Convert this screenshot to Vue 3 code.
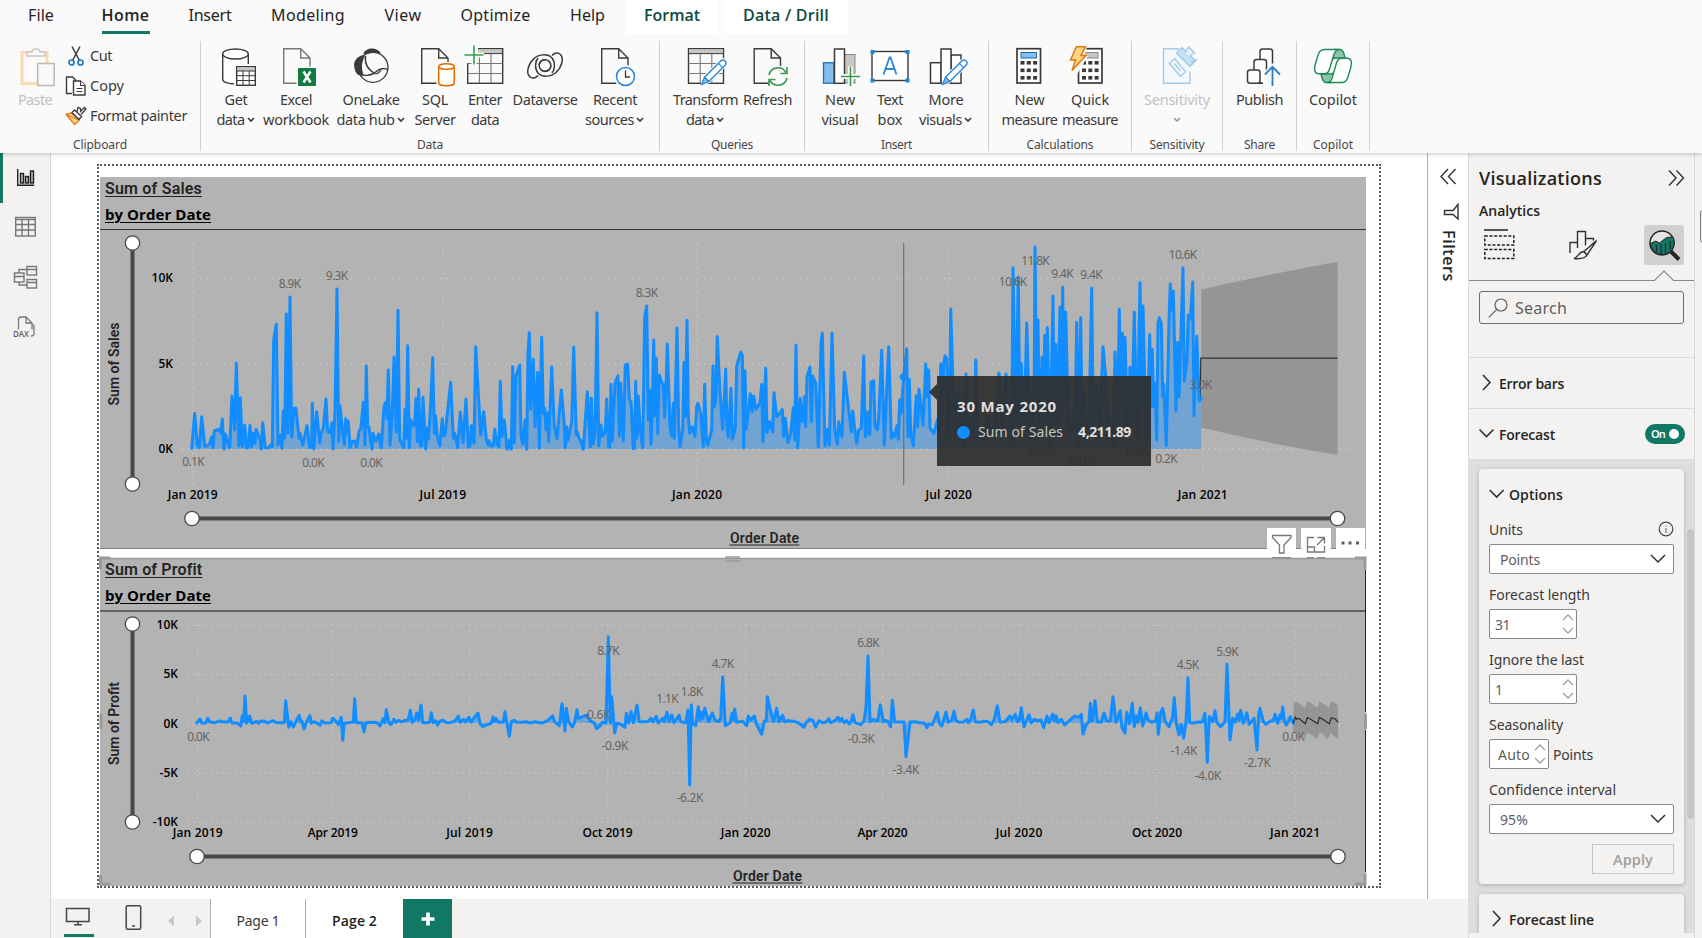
<script setup>
// Spreads or tightens the letters of an element so its text spans a given length.
const vFit = {
  mounted(el, { value, modifiers }) {
    if (!value) return
    const r = el.getBoundingClientRect()
    const w = modifiers.down ? r.height : r.width
    const n = el.textContent.trim().length
    el.style.letterSpacing = ((value - w) / n).toFixed(3) + 'px'
  }
}

const tabs = [
  { t: 'File', w: 82, f: 26 },
  { t: 'Home', w: 87, f: 48, c: 'active' },
  { t: 'Insert', w: 82, f: 43 },
  { t: 'Modeling', w: 114, f: 74 },
  { t: 'View', w: 76, f: 37 },
  { t: 'Optimize', w: 109, f: 70 },
  { t: 'Help', w: 75, f: 35 },
  { t: 'Format', w: 94, f: 56, c: 'ctx' },
  { t: 'Data / Drill', w: 124, f: 86, c: 'ctx drill' }
]

const D = '#3b3a39'
const doc = (x, c = D, f = '#fff') =>
  `<path d="M${x + .7} 4.7h17l9.3 9.3v25.3h-26.3z" fill="${f}" stroke="${c}" stroke-width="1.4"/><path d="M${x + 17.7} 4.7v9.3h9.3" fill="none" stroke="${c}" stroke-width="1.4"/>`
const docIn = (x) => doc(x, D, '#fafafa')
const cover = (x, y, w, h) => `<rect x="${x}" y="${y}" width="${w}" height="${h}" fill="#fafafa"/>`
const plus = (x, y) => `<path d="M${x} ${y - 10}v20M${x - 10} ${y}h20" stroke="#fafafa" stroke-width="5"/><path d="M${x} ${y - 9.5}v19M${x - 9.5} ${y}h19" stroke="#359e4c" stroke-width="1.6"/>`
const grid = (x) =>
  `<rect x="${x}" y="4.7" width="35" height="34.6" fill="#fafafa" stroke="${D}" stroke-width="1.4"/><rect x="${x + .7}" y="5.4" width="33.6" height="4" fill="#c8c6c4"/><path d="M${x} 9.6h35" stroke="${D}"/><path d="M${x} 19.5h35M${x} 29.5h35M${x + 11.7} 10v29M${x + 23.3} 10v29" stroke="#797775" stroke-width="1.1"/>`
const pencil = (x, y) =>
  `<g transform="translate(${x} ${y}) rotate(45)"><path d="M-4.6-35h9.2v28l-4.6 8-4.6-8z" fill="#fafafa"/><path d="M-3-31a3 3 0 0 1 6 0v23h-6z" fill="#fff" stroke="#2b88d8" stroke-width="1.4"/><path d="M-3-27.500h6" stroke="#2b88d8" stroke-width="1.2"/><path d="M-3-8h6l-3 7.500z" fill="#83beec" stroke="#2b88d8" stroke-width="1.2"/></g>`
const calc = (x) => {
  let s = `<rect x="${x}" y="4.700" width="23.500" height="34.300" fill="#fff" stroke="${D}" stroke-width="1.700"/>`
  for (const r of [17, 24.500, 32]) for (const c of [4, 10.300, 16.600]) s += `<rect x="${x + c - .5}" y="${r}" width="4" height="3.600" fill="${D}"/>`
  return s
}
const icons = {
  get: `<path d="M8.700 10v25.300c0 2.500 5 4.700 12.800 4.700s12.800-2.200 12.800-4.700v-25.300" fill="#fff" stroke="${D}" stroke-width="1.400"/><ellipse cx="21.500" cy="10" rx="12.800" ry="5" fill="#fff" stroke="${D}" stroke-width="1.400"/>` + cover(20, 20, 24, 24) + `<rect x="22.700" y="22.700" width="18.600" height="18.600" fill="#fff" stroke="${D}" stroke-width="1.400"/><rect x="23.400" y="23.400" width="17.200" height="3.600" fill="#c8c6c4"/><path d="M22.700 27h18.600M22.700 31.700h18.600M22.700 36.500h18.600M29 27v14M35.200 27v14" stroke="${D}" stroke-width="1"/>`,
  excel: doc(9, '#797775', '#fafafa') + cover(22.500, 22.500, 20, 20) + `<rect x="24" y="24" width="18" height="18" rx="1" fill="#107c41"/><path d="M29.500 27.500l7 11M36.500 27.500l-7 11" stroke="#fff" stroke-width="2.500"/>`,
  lake: `<path d="M14 10c3-7 14-7.500 18-.5l-8-1.500z" fill="${D}"/><path d="M16 11c-8 0-12 7-10.700 12 .5 4 2 6.500 4 8l8-2c-3-6-4-12-1.300-18z" fill="${D}"/><circle cx="24" cy="23.300" r="15" fill="#fafafa" stroke="${D}" stroke-width="1.300"/><path d="M13.500 12.800a15 15 0 0 0-3 17.500l4 .5c-2-6-2.500-12 1.500-18.800z" fill="${D}"/><path d="M14 13c4-5 14-6 18-2.500-4-5-13-8-18 2.500z" fill="${D}"/><path d="M16.500 12c-1 8 3 14 9.500 17.500M9.500 30c6 2.500 14 1.500 18-2.500 3-3 8-3.500 11-2" fill="none" stroke="${D}" stroke-width="1.400"/><path d="M25.500 30c3 0 5-1 6.500-4.500" fill="none" stroke="${D}" stroke-width="1.200"/>`,
  sql: docIn(8) + cover(23.500, 18, 20, 26) + `<path d="M25.700 22.500v16.500c0 1.500 3.500 2.800 7.800 2.800s7.800-1.300 7.800-2.800v-16.500" fill="#fff" stroke="#e06c00" stroke-width="1.500"/><ellipse cx="33.500" cy="22.500" rx="7.800" ry="2.800" fill="#fff" stroke="#e06c00" stroke-width="1.500"/>`,
  enter: grid(4.700) + cover(0, 0, 15, 19) + plus(11, 11),
  dv: `<g fill="none" stroke="${D}" stroke-width="1.500"><circle cx="22" cy="21.500" r="5.800"/><path d="M29 29c3-3.500 3.500-11 0-15-4-4.500-13-4-18 .5-6 5.500-8 14-4.500 18 2.500 2.500 6 2 8.500-1"/><path d="M15 14c-3 3.500-3.500 11 0 15 4 4.500 13 4 18-.5 6-5.500 8-14 4.500-18-2.500-2.500-6-2-8.500 1"/><path d="M16 21c.5-3 3-5.500 6.500-5.500M28 22c-.5 3-3 5.500-6.500 5.500"/></g>`,
  recent: docIn(8) + `<circle cx="32.500" cy="32.500" r="11.500" fill="#fafafa"/><circle cx="32.500" cy="32.500" r="9" fill="#fff" stroke="#2b88d8" stroke-width="1.500"/><path d="M32.500 26.500v6.500h4.500" fill="none" stroke="${D}" stroke-width="1.300"/>`,
  transform: grid(4.500) + pencil(17, 41),
  refresh: docIn(7.500) + `<circle cx="32" cy="32.500" r="11" fill="#fafafa"/><path d="M23 31a9.200 9.200 0 0 1 17-2.500M41 34a9.200 9.200 0 0 1-17 2.500M41 23v6.500h-6.500M23 42v-6.500h6.500" fill="none" stroke="#3f9b55" stroke-width="1.700"/>`,
  visual: `<rect x="26.500" y="10.500" width="10.500" height="28.500" fill="#c8c6c4" stroke="#8a8886"/><rect x="5.500" y="18.700" width="10.500" height="20.500" fill="#83beec" stroke="#1a6fb5" stroke-width="1.300"/><rect x="16.500" y="5" width="10" height="34.300" fill="#fff" stroke="${D}" stroke-width="1.500"/>` + plus(32.500, 32.500),
  text: `<rect x="4" y="7.500" width="36" height="29" fill="#fff" stroke="${D}" stroke-width="1.400"/><path d="M2.500 6h4v4h-4zM37.500 6h4v4h-4zM2.500 34.500h4v4h-4zM37.500 34.500h4v4h-4z" fill="#1f86d6"/><path d="M15.500 30.500l6-17h1l6 17M17.500 25h9" fill="none" stroke="#2b88d8" stroke-width="1.800"/>`,
  more: `<g fill="#fff" stroke="${D}" stroke-width="1.500"><rect x="6.500" y="18.700" width="10.500" height="20.500"/><rect x="27" y="11" width="10" height="28.300"/><rect x="17" y="5" width="10" height="34.300"/></g>` + pencil(18, 41),
  calc: calc(9) + `<rect x="13" y="8.500" width="15.500" height="5.500" fill="#83beec" stroke="#1a6fb5"/>`,
  quick: calc(10.500) + `<rect x="14.500" y="8.500" width="15.500" height="5.500" fill="#c8c6c4" stroke="#8a8886"/>` + `<path d="M1 0h19l-4 12h4l-12 20h-6l3-11h-5z" fill="#fafafa"/><path d="M8.500 2.800h9l-4.500 8.700h5l-14 15 3.500-10.500h-5z" fill="#ffd58a" stroke="#e07a10" stroke-width="1.500"/>`,
  sens: `<path d="M24 4.700h-15.500v34.600h26.500v-12" fill="#f4f8fb" stroke="#9fcbe6" stroke-width="1.400"/><g fill="none" stroke="#9fcbe6" stroke-width="1.400"><rect x="-3.500" y="-8.500" width="7" height="17" transform="translate(22.500 23.500) rotate(-40)"/><path d="M19.500 19.500l6 7.500"/><rect x="-4" y="-9.500" width="8" height="19" fill="#c4e0f1" transform="translate(31 13) rotate(-45)"/><path d="M30.500 8.500l3-5.500 6 6-5 3.500M36 18.500l6-3" fill="#e6f2f9"/></g>`,
  publish: `<g fill="#fff" stroke="${D}" stroke-width="1.500"><rect x="22" y="5" width="12.500" height="34.300" rx="2.500"/><rect x="16" y="15.500" width="12.500" height="23.800" rx="2.500"/><rect x="9.500" y="26" width="12.500" height="13.300" rx="2.500"/></g>` + cover(25, 26, 18, 18) + `<path d="M22 39.300h3" stroke="${D}" stroke-width="1.500"/><path d="M34.500 42v-19M27 30.500l7.500-7.700 7.500 7.700" fill="none" stroke="#fafafa" stroke-width="5"/><path d="M34.500 42v-19M27 30.500l7.500-7.700 7.500 7.700" fill="none" stroke="#2b7cc0" stroke-width="1.800"/>`,
  copilot: `<g stroke="#1f8a56" stroke-width="1.400" stroke-linejoin="round"><path d="M23 5.500h6c2.500 0 4 3 5 8.500h-9c-4 0-5 2-6 5z" fill="#8fc3a8"/><path d="M21 38.500h-6c-2.500 0-4-3-5-8.500h9c4 0 5-2 6-5z" fill="#8fc3a8"/><path d="M13 5.500h15c-3.500 0-5 3-6.500 9.500l-3 10c-1 3.500-2.500 4.800-5 4.800h-5.500c-4.500 0-5-4-4-8.500l3-10c1.200-4 3-5.800 6-5.800z" fill="#fff"/><path d="M31 38.500h-14.500c3.500 0 5-3 6-9.500l3-10c1-3.500 2.500-4.800 5-4.800h5.500c4.500 0 5 4 4 8.500l-3 10c-1.200 4-3 5.800-6 5.800z" fill="#fff"/></g>`
}

const groups = [
  { n: 'Data', w: 459, p: 5, f: 26, b: [
    { i: 'get', w: 60, a: 'Get', fa: 23, b: 'data', fb: 28, d: 1 },
    { i: 'excel', w: 60, a: 'Excel', fa: 32, b: 'workbook', fb: 66 },
    { i: 'lake', w: 90, a: 'OneLake', fa: 57, b: 'data hub', fb: 58, d: 1 },
    { i: 'sql', w: 38, a: 'SQL', fa: 26, b: 'Server', fb: 41 },
    { i: 'enter', w: 62, a: 'Enter', fa: 34, b: 'data', fb: 28 },
    { i: 'dv', w: 58, a: 'Dataverse', fa: 65 },
    { i: 'recent', w: 82, a: 'Recent', fa: 44, b: 'sources', fb: 49, d: 1 }] },
  { n: 'Queries', w: 145, p: 8, f: 42, b: [
    { i: 'transform', w: 75, a: 'Transform', fa: 65, b: 'data', fb: 28, d: 1 },
    { i: 'refresh', w: 49, a: 'Refresh', fa: 49 }] },
  { n: 'Insert', w: 184, p: 10, f: 31, b: [
    { i: 'visual', w: 50, a: 'New', fa: 30, b: 'visual', fb: 37 },
    { i: 'text', w: 50, a: 'Text', fa: 26, b: 'box', fb: 25 },
    { i: 'more', w: 62, a: 'More', fa: 35, b: 'visuals', fb: 43, d: 1 }] },
  { n: 'Calculations', w: 143, p: 11, f: 67, b: [
    { i: 'calc', w: 59, a: 'New', fa: 30, b: 'measure', fb: 56 },
    { i: 'quick', w: 62, a: 'Quick', fa: 38, b: 'measure', fb: 56 }] },
  { n: 'Sensitivity', w: 91, p: 0, f: 55, b: [{ i: 'sens', w: 90, a: 'Sensitivity', fa: 66, b: '', d: 1, dis: 1 }] },
  { n: 'Share', w: 74, p: 0, f: 31, b: [{ i: 'publish', w: 73, a: 'Publish', fa: 47 }] },
  { n: 'Copilot', w: 73, p: 0, f: 40, b: [{ i: 'copilot', w: 72, a: 'Copilot', fa: 48 }] }
]

// Series points are stored at three times the drawing scale, per stretch of the time axis.
const seg = (ox, oy, s) => s.trim().split(/\s+/).map((p) => {
  const [x, y] = p.split(',').map(Number)
  return (ox + x / 3).toFixed(1) + ',' + (oy + y / 3).toFixed(1)
}).join(' ')

const sales = [
  seg(0, 150, `575,895 584,790 592,885 598,893 605,800 614,888 622,888 630,878 635,860 639,893 643,843 660,837 663,850 667,807 672,897 676,852 684,880 689,893 696,738 704,840 709,640 717,888 721,743 727,890 734,826 739,893 744,893 750,826 755,890 760,850 765,880 768,838 780,868 784,897 788,818 796,893 806,893 812,885 817,890 821,570 829,523 834,885 841,855 846,895 850,783 854,865 859,492 864,850 870,441 875,862 882,775 888,775 897,865 900,850 908,885 921,827 929,893 935,890 937,760 941,897 950,785 959,878 964,847 970,835 978,747 983,845 990,848 996,818 999,897 1005,790 1011,417 1016,875 1020,767 1028,850 1033,885 1037,806 1041,850 1045,813 1050,893 1056,875 1064,873 1070,892 1078,840 1082,838 1090,757 1095,885 1099,648 1103,830 1107,832 1112,875 1116,897 1119,850 1127,873 1136,852 1144,893 1152,770 1157,757 1161,805 1165,660 1170,885 1177,790 1182,622 1189,845 1194,481 1199,870 1205,880 1211,893 1215,778 1219,865 1223,587 1228,893 1232,810 1240,828 1244,815 1248,745 1252,875 1256,718 1261,888 1265,888 1269,742 1277,897 1281,835 1285,868 1290,800 1298,623 1303,850 1307,798 1311,855 1319,888 1327,806 1330,858 1335,855 1352,697 1360,865 1364,850 1373,893 1381,786 1389,878 1398,747 1405,890 1410,888 1414,827 1422,880`),
  seg(460, 220, `47,381 62,645 71,575 79,660 84,675 87,662 92,678 100,677 104,628 112,675 117,680 121,484 126,650 133,600 141,688 149,660 154,688 158,440 163,668 167,470 179,435 183,645 188,672 195,600 200,688 204,400 208,338 212,568 220,418 225,620 233,457 238,685 245,352 250,580 254,565 258,630 262,578 266,665 275,441 283,620 291,656 304,510 312,600 316,683 320,620 324,660 335,605 341,382 349,645 352,635 358,658 362,660 370,688 382,515 391,680 394,535 399,672 405,640 411,278 416,678 423,615 428,648 436,635 440,537 446,682 449,680 453,493 457,663 465,490 474,467 478,648 482,490 490,663 496,435 503,433 508,537 513,545 520,686 523,685 527,484 531,655 535,528 540,625 548,683 554,290 560,258 565,600 569,510 573,673 577,560 581,360 585,587 589,415 593,640 598,465 606,490 610,492 614,592 618,500 622,373 630,620 635,647 640,550 643,655 651,324 656,620 660,680 668,630 672,427 676,590 681,301 685,585 689,640 697,620 705,650 710,560 714,550 722,580 730,680 734,493 739,655 743,675 755,630 759,438 763,560 767,545 772,350 780,520 788,628 797,448 801,625 805,652 813,505 817,658 826,625 830,438 842,397 847,405 851,683 855,452 859,627 871,521 876,575 881,528 888,568 900,548 905,493 909,665 917,445 921,638 929,605 938,635 942,518 950,590 958,582 967,568 971,650 976,595 984,668 992,640 1000,563 1004,660 1008,376 1013,683 1021,535 1026,605 1030,600 1033,530 1037,620 1041,470 1050,442 1054,605 1058,468 1067,490 1075,680 1083,370 1087,340 1095,677 1100,628 1108,675 1116,340 1124,630 1132,673 1136,605 1146,650 1153,457 1174,635 1178,573 1183,615 1190,670 1196,630 1204,625 1211,408 1216,650 1220,640 1224,575 1229,645 1233,487 1241,482 1245,618 1252,630 1256,595 1265,391 1273,675 1286,380 1294,655 1298,640 1303,650 1311,617 1315,658 1319,540 1323,580 1331,470 1340,386 1344,650 1348,478 1352,640 1360,677 1369,527 1373,620`),
  seg(900, 220, `57,508 69,615 77,432 81,530 86,450 90,625 102,640 112,600 118,650 122,432 127,540 131,430 135,408 140,415 148,670 152,267 160,520 165,650 173,515 190,680 198,462 205,640 215,600 222,650 227,420 235,640 250,660 262,590 280,650 297,459 308,640 318,462 328,600 335,670 339,143 347,600 355,172 360,620 364,430 372,650 380,309 390,660 397,520 402,600 405,81 410,560 414,300 418,650 426,412 430,600 434,346 438,620 442,323 450,680 459,228 463,600 467,373 472,620 480,262 484,600 488,202 492,540 497,276 505,600 515,640 521,560 525,620 530,307 538,680 542,293 547,640 552,520 560,660 567,600 575,205 580,640 590,500 598,660 609,380 617,470 625,640 635,600 640,680 645,396 652,620 658,268 663,560 667,340 671,620 675,352 683,640 690,442 695,600 703,277 711,660 720,188 725,560 729,258 738,680 743,600 749,344 753,560 757,388 761,560 765,490 770,660 774,310 778,294 784,310 788,530 791,492 799,677 807,300 811,192 815,270 820,213 828,572 833,367 837,530 849,143 853,483 861,420 865,285 871,298 878,186 882,587 890,349 898,543 904,535`)
].join(' ')

const profit = [
  seg(90, 550, `320,519 330,507 335,519 347,519 353,505 360,516 375,518 388,513 400,516 415,515 421,504 426,519 440,519 447,523 452,528 457,497 461,515 465,438 470,520 479,498 485,520 500,514 505,520 512,513 525,514 531,519 550,512 560,518 583,518 587,452 596,532 603,515 610,531 618,514 628,496 632,516 636,514 642,537 651,512 660,497 664,520 672,515 682,520 690,526 696,512 703,519 723,518 728,505 735,510 745,524 754,502 758,571 763,520 775,518 785,517 790,516 794,446 799,518 816,518 822,545 827,518 850,517 862,518 870,528 880,505 885,518 889,479 897,518 903,524 912,508 918,517 926,511 935,516 945,511 955,510 961,481 967,517 974,510 980,489 986,510 993,465 998,518 1010,518 1019,516 1024,488 1030,518 1037,512 1043,525 1050,513 1060,511 1067,517 1080,518 1095,513 1105,498 1110,517 1120,508 1126,516 1137,502 1143,517 1155,500 1164,489 1170,520 1178,530 1190,524 1204,520 1209,501 1213,515 1218,505 1225,517 1240,517 1245,485 1250,515 1258,559 1264,515 1272,511 1280,517 1295,517 1308,515 1320,519 1335,515 1350,518`),
  seg(520, 550, `70,518 85,510 98,497 104,516 118,527 126,461 135,543 139,475 146,515 157,531 163,520 171,479 175,505 190,500 200,495 210,513 222,518 230,536 240,528 247,517 258,520 265,260 271,520 275,440 284,549 290,520 300,522 315,532 319,490 326,519 333,485 340,518 351,466 358,515 375,515 385,514 393,505 399,515 409,499 415,519 428,505 433,515 441,487 447,515 455,495 462,518 477,496 483,515 497,518 504,480 509,705 514,465 518,520 527,527 535,470 541,510 545,487 549,505 554,475 566,515 577,489 585,510 595,515 602,505 608,380 616,527 630,519 636,490 640,510 644,477 650,517 668,514 680,527 685,498 692,510 703,498 709,521 725,553 733,513 739,513 742,440 752,485 761,514 770,475 777,515 788,496 793,515 803,512 822,514 836,519 852,532 858,518 869,507 879,512 887,532 897,512 908,518 918,516 926,506 932,518 947,510 954,502 960,513 966,505 972,518 980,512 988,522 994,513 999,494 1005,518 1022,524 1032,513 1038,470 1044,318 1050,515 1060,508 1065,510 1073,513 1081,464 1090,515 1096,511 1104,515 1112,530 1117,451 1124,516 1140,516 1152,516 1158,620 1170,516 1185,515 1200,518 1214,520 1221,533 1226,522 1237,524 1252,487 1258,520 1265,528 1278,487 1285,517 1295,511 1302,484 1308,512 1318,517 1330,516`),
  seg(950, 550, `50,508 55,518 62,508 70,480 76,515 90,517 102,514 115,515 124,524 133,508 142,467 150,516 165,515 180,498 185,510 196,493 202,515 208,510 214,473 222,531 237,494 244,519 253,508 262,512 273,510 281,533 291,498 297,518 308,492 313,512 318,497 324,518 334,508 344,525 360,510 374,498 388,502 394,493 399,552 408,525 417,515 421,460 427,513 435,452 442,515 453,517 462,489 470,513 481,512 489,440 498,517 511,482 516,533 525,549 530,487 538,521 547,460 553,530 559,498 564,517 571,473 578,528 588,489 594,510 605,517 617,513 621,488 625,553 632,488 638,475 646,515 657,530 668,500 673,443 679,520 687,554 693,525 701,565 708,515 714,383 719,518 730,519 745,516 756,517 765,490 772,637 778,500 788,515 795,482 801,518 812,530 825,515 831,343 840,570 848,505 855,517 863,492 867,510 872,481 880,520 890,488 898,523 912,505 921,600 926,490 930,475 940,515 948,523 960,514 970,511 975,493 983,520 990,495 994,505 998,471 1003,512 1009,525 1021,500 1030,520`)
].join(' ')

const band = seg(950, 550, `1028,520 1032,458 1042,456 1065,474 1072,454 1084,460 1102,474 1108,454 1136,473 1144,454 1164,466 1164,567 1142,550 1132,567 1118,552 1108,548 1102,568 1082,552 1070,548 1065,567 1045,550 1030,548`)
const trend = seg(950, 550, `1030,520 1036,502 1040,508 1046,505 1066,521 1072,503 1082,508 1103,521 1108,502 1118,508 1138,521 1144,503 1156,507 1165,517`)

const charts = [
  {
    id: 'sales', name: 'Sales', fTitle: 97, box: '100 230 1266 318', h: 318,
    line: sales, area: '191.7,449 ' + sales + ' 1201.300,449',
    yt: [['10K', 278.3], ['5K', 363.800], ['0K', 449]], yx: 173, gx: 182, y0: 243, y1: 485,
    xt: [['Jan 2019', 192.700], ['Jul 2019', 442.800], ['Jan 2020', 697], ['Jul 2020', 948.700], ['Jan 2021', 1202.700]], xy: 494,
    labels: [['8.9K', 290, 284], ['9.3K', 337, 276], ['0.1K', 193.500, 462], ['0.0K', 313.500, 463], ['0.0K', 371.500, 463], ['8.3K', 647, 293], ['10.6K', 1013, 282], ['11.8K', 1035.500, 261], ['9.4K', 1062.500, 274], ['9.4K', 1091.500, 275], ['10.6K', 1183, 255], ['3.0K', 1201, 385], ['0.2K', 1166.500, 459], ['0.6K', 1039.500, 452], ['0.1K', 1079.500, 461], ['0.6K', 1137, 452]],
    v: [243, 484], vt: 364, hs: [192, 1337.500], hy: 518.500, ox: 764, oy: 538
  },
  {
    id: 'profit', name: 'Profit', fTitle: 97, box: '100 612 1266 274', h: 274,
    line: profit, area: '196.700,723 ' + profit + ' 1293.300,723',
    yt: [['10K', 625.300], ['5K', 674.500], ['0K', 723.700], ['-5K', 773], ['-10K', 822]], yx: 178, gx: 187, y0: 625, y1: 822,
    xt: [['Jan 2019', 197.700], ['Apr 2019', 332.800], ['Jul 2019', 469.500], ['Oct 2019', 607.600], ['Jan 2020', 745.700], ['Apr 2020', 882.500], ['Jul 2020', 1019], ['Oct 2020', 1157], ['Jan 2021', 1295]], xy: 832,
    labels: [['8.7K', 608.500, 651], ['-0.6K', 597, 715], ['1.1K', 667.500, 699], ['1.8K', 692, 692], ['4.7K', 723, 664], ['-0.9K', 615, 746], ['-6.2K', 690, 798], ['6.8K', 868.500, 643], ['-0.3K', 861.500, 739], ['-3.4K', 906, 770], ['4.5K', 1188, 665], ['5.9K', 1227.500, 652], ['-1.4K', 1184, 751], ['-4.0K', 1208, 776], ['-2.7K', 1257.500, 763], ['0.0K', 1293.500, 737], ['0.0K', 198.500, 737]],
    v: [624, 822], vt: 723.500, hs: [197, 1338], hy: 856.500, ox: 767, oy: 876
  }
]
const labelWidth = (t) => (t.length === 4 ? 22.500 : t[0] === '-' ? 27 : 28.500)
</script>

<template>
  <div class="app">
    <header class="ribbon">
      <nav class="tabs">
        <div v-for="t in tabs" :key="t.t" class="tab" :class="t.c" :style="{ width: t.w + 'px' }"><span v-fit="t.f">{{ t.t }}</span></div>
      </nav>
      <div class="groups">
        <section class="group clip">
          <div class="clipbody">
            <div class="btn paste">
              <svg width="44" height="44"><g fill="none"><rect x="9" y="8.500" width="25" height="31" stroke="#fbd9ae" stroke-width="3" fill="#fdfbf7"/><path d="M14 12v-4h5c0-4 8-4 8 0h5v4z" fill="#fafafa" stroke="#c8c6c4" stroke-width="1.400"/><rect x="24.700" y="19.500" width="16.500" height="22" fill="#fafafa" stroke="#bdbbb9" stroke-width="1.600"/></g></svg>
              <span class="l" v-fit="34">Paste</span>
            </div>
            <div class="cmds">
              <div class="cmd">
                <svg width="22" height="22"><path d="M7 1.500l7.500 14M15 1.500l-7.500 14" stroke="#3b3a39" stroke-width="1.500" fill="none"/><g fill="none" stroke="#1f78bf" stroke-width="1.700"><circle cx="6.500" cy="17.500" r="2.500"/><circle cx="15.500" cy="17.500" r="2.500"/></g></svg>
                <span v-fit="22">Cut</span>
              </div>
              <div class="cmd">
                <svg width="22" height="22"><g fill="#fff" stroke="#3b3a39" stroke-width="1.400"><path d="M7 18.500h-5.500v-16.500h6l3 3v2"/><path d="M8.500 6h7l4.500 4.500v9.500h-11.500z"/><path d="M15.500 6v4.500h4.500M11.500 13.500h6M11.500 16.500h6" stroke-width="1.100"/></g></svg>
                <span v-fit="34">Copy</span>
              </div>
              <div class="cmd">
                <svg width="22" height="22"><path d="M1.200 9.500l5-1.500 8 7-4.500 4.500z" fill="#ffd9a0" stroke="#e07a10" stroke-width="1.400"/><path d="M1.200 9.500l11 5" stroke="#e07a10" stroke-width="1.200"/><path d="M7 7.500l2.500-2.500 7 6.500-2.500 3zM12 7l1-4.500 2.500 1v3l4-4 1.500 1.500-5 5.500" fill="#fff" stroke="#3b3a39" stroke-width="1.300"/></svg>
                <span v-fit="97">Format painter</span>
              </div>
            </div>
          </div>
          <div class="gname"><span v-fit="54">Clipboard</span></div>
        </section>
        <section v-for="g in groups" :key="g.n" class="group" :style="{ width: g.w + 'px' }">
          <div class="row" :style="{ paddingLeft: g.p + 'px' }">
            <div v-for="b in g.b" :key="b.i" class="btn" :class="{ dis: b.dis }" :style="{ width: b.w + 'px' }">
              <svg width="44" height="44" v-html="icons[b.i]"></svg>
              <span class="l" v-fit="b.fa">{{ b.a }}</span>
              <span class="l two" v-if="b.b || b.d"><span v-if="b.b" v-fit="b.fb">{{ b.b }}</span><svg v-if="b.d" class="dd" width="8" height="6"><path d="M1 1l3 3 3-3" fill="none" stroke="currentColor" stroke-width="1.700"/></svg></span>
            </div>
          </div>
          <div class="gname"><span v-fit="g.f">{{ g.n }}</span></div>
        </section>
      </div>
    </header>

    <main class="body">
      <aside class="rail">
        <div class="ri on"><svg width="26" height="26"><g fill="none" stroke="#201f1e" stroke-width="1.400"><path d="M5.700 4v16.300h16.500"/><rect x="8.500" y="8.500" width="3" height="9.500" fill="#bbb"/><rect x="13.500" y="11.500" width="3" height="6.500" fill="#bbb"/><rect x="18.500" y="6" width="3" height="12" fill="#bbb"/></g></svg></div>
        <div class="ri"><svg width="26" height="26"><g fill="none" stroke="#797775" stroke-width="1.400"><rect x="3.700" y="2.500" width="19.500" height="18.500"/><path d="M3.700 4.500h20M3.700 9.500h20M3.700 15h20M10 5v16M16.500 5v16"/></g></svg></div>
        <div class="ri"><svg width="26" height="26"><g fill="none" stroke="#797775" stroke-width="1.400"><rect x="2.500" y="8" width="9.500" height="9"/><path d="M2.500 11.500h9.500M15 4.500h-8v3.500M7 17v3h8"/><rect x="15" y="1.500" width="9.500" height="8.500"/><path d="M15 4.500h9.500M15 17.500h9.500"/><rect x="15" y="14.500" width="9.500" height="8.500"/></g></svg></div>
        <div class="ri dax"><svg width="26" height="26"><path d="M6.500 14.500v-10q0-2.500 2.500-2.500h5l6 6v6.500M14 2.500v5.500h5.500M21 9.500q1.500 1 1 3v6q0 2.500-3 2.500" fill="none" stroke="#797775" stroke-width="1.300"/><text x="1" y="21.500" textLength="16" font-size="8" font-weight="600" fill="#5f5d5b" font-family="Open Sans, sans-serif">DAX</text></svg></div>
      </aside>

      <div class="work">
        <div class="canvas">
          <div class="page">
            <article v-for="c in charts" :key="c.id" class="card" :class="c.id">
              <div class="head">
                <div class="t1"><span v-fit="c.fTitle">Sum of {{ c.name }}</span></div>
                <div class="t2"><span v-fit="106">by Order Date</span></div>
              </div>
              <svg class="plot" width="1266" :height="c.h" :viewBox="c.box">
                <g stroke="#c9c9c9" stroke-width="1.300" stroke-dasharray="1.500 4.500">
                  <line v-for="y in c.yt" :key="y[0]" :x1="c.gx" x2="1348" :y1="y[1]" :y2="y[1]" />
                  <line v-for="x in c.xt" :key="x[0]" :x1="x[1]" :x2="x[1]" :y1="c.y0" :y2="c.y1" />
                </g>
                <template v-if="c.id === 'sales'">
                  <path d="M1201.300 289.500Q1265 275 1337.600 261.700V455Q1265 443 1201.300 427.500z" fill="#959595" />
                  <path d="M1200.300 398L1200.800 358.200H1337.600" fill="none" stroke="#2f2f2f" stroke-width="1.200" />
                </template>
                <template v-else>
                  <polygon :points="band" fill="#959595" />
                </template>
                <polygon :points="c.area" fill="#118dff" fill-opacity=".4" />
                <polyline :points="c.line" fill="none" stroke="#118dff" stroke-width="3" stroke-linejoin="round" stroke-linecap="round" />
                <polyline v-if="c.id === 'profit'" :points="trend" fill="none" stroke="#2b2b2b" stroke-width="1.200" />
                <g v-if="c.id === 'sales'"><circle cx="903" cy="377" r="3.300" fill="#118dff" /><path d="M903.700 243v242" stroke="#707070" stroke-width="1.200" /></g>
                <g class="dl"><text v-for="(l, i) in c.labels" :key="i" :x="l[1]" :y="l[2] + 3.700" :textLength="labelWidth(l[0])">{{ l[0] }}</text></g>
                <g class="yl"><text v-for="y in c.yt" :key="y[0]" :x="c.yx" :y="y[1] + 3.800">{{ y[0] }}</text></g>
                <g class="xl"><text v-for="x in c.xt" :key="x[0]" :x="x[1]" :y="c.xy + 4.500" :textLength="x[0][0] === 'J' && x[0][1] === 'u' ? 46.500 : 50">{{ x[0] }}</text></g>
                <g stroke="#4a4846"><path :d="`M132.500 ${c.v[0]}V${c.v[1]}M${c.hs[0]} ${c.hy}H${c.hs[1]}`" stroke-width="4" />
                  <g fill="#fff" stroke-width="1.300"><circle cx="132.500" :cy="c.v[0]" r="7.200" /><circle cx="132.500" :cy="c.v[1]" r="7.200" /><circle :cx="c.hs[0]" :cy="c.hy" r="7.200" /><circle :cx="c.hs[1]" :cy="c.hy" r="7.200" /></g></g>
                <text class="at" :transform="`translate(118.500 ${c.vt}) rotate(-90)`" textLength="83">Sum of {{ c.name }}</text>
                <text class="at" :x="c.ox + .5" :y="c.oy + 5" textLength="69">Order Date</text>
                <path :d="`M${c.ox - 34.500} ${c.oy + 7}h70`" stroke="#252423" stroke-width="1.200" />
              </svg>

              <div v-if="c.id === 'sales'" class="tools">
                <div class="tool w29"><svg width="29" height="30"><path d="M5.500 7.500h18.500v2l-7 7.500v8h-4.500v-8l-7-7.500z" fill="none" stroke="#797775" stroke-width="1.300"/><path d="M5 29.500h19" stroke="#8a8886"/></svg></div>
                <div class="tool w30"><svg width="30" height="30"><path d="M13 9.500h-6.500v14.500h17v-6M6.500 19h7v5M16.500 9.500h7v6M16 17l7-7" fill="none" stroke="#797775" stroke-width="1.300"/><path d="M6 29.500h7M16 29.500h8" stroke="#8a8886"/></svg></div>
                <div class="tool w29"><svg width="29" height="30"><path d="M5.500 13.500h3v3h-3zM12.500 13.500h3v3h-3zM20 13.500h3v3h-3z" fill="#605e5c"/></svg></div>
              </div>
              <div v-if="c.id === 'sales'" class="tip">
                <div class="date"><span v-fit="100">30 May 2020</span></div>
                <div class="val"><i></i><span class="k" v-fit="85">Sum of Sales</span><b v-fit="53">4,211.89</b></div>
              </div>
              <svg v-if="c.id === 'profit'" class="handles" width="1271" height="331"><g fill="none" stroke="#9a9a9a"><path d="M0 2.500h1267" stroke-width="1.500"/><path d="M1.500 13v-11h10M1256 2h10v11.500M1.500 319v9h10M1256 328h10v-10" stroke-width="3"/><path d="M2 158v15M1266.500 158v15" stroke-width="3"/></g><path d="M1266.500 14v142M1266.500 174v142" stroke="#222"/><path d="M626 1h15M626 5h15" stroke="#999" stroke-width="1.500"/></svg>
            </article>
          </div>
        </div>
        <footer class="foot">
          <div class="vi on"><svg width="30" height="30"><path d="M2.500 4.500h22.500v13h-22.500zM14 17.500v3M10 20.700h8" fill="none" stroke="#484644" stroke-width="1.500"/></svg></div>
          <div class="vi ph"><svg width="20" height="30"><rect x="2.200" y="1.700" width="14.500" height="23.500" rx="1.500" fill="none" stroke="#484644" stroke-width="1.500"/><path d="M8 22h3" stroke="#484644" stroke-width="1.500"/></svg></div>
          <svg class="arr" width="36" height="12"><path d="M6 .5v11l-6-5.500zM28 .5v11l6-5.500z" fill="#c8c6c4"/></svg>
          <div class="pt"><span v-fit="43">Page 1</span></div>
          <div class="pt cur"><span v-fit="45">Page 2</span></div>
          <div class="add"><svg width="16" height="16"><path d="M8 1.500v13M1.500 8h13" stroke="#fff" stroke-width="3.600"/></svg></div>
        </footer>
      </div>

      <aside class="filters">
        <svg width="40" height="80"><g fill="none" stroke="#323130" stroke-width="1.400"><path d="M20 16l-7 7.500 7 7.500M27.500 16l-7 7.500 7 7.500"/><path d="M30 51.500v14.500l-5-4.500h-8.500v-4h8.500z"/></g></svg>
        <div class="ft"><span v-fit.down="52">Filters</span></div>
      </aside>

      <aside class="viz">
        <div class="vh">
          <span class="vt" v-fit="123">Visualizations</span>
          <svg width="17" height="18"><path d="M1 1.500l7 7.500-7 7.500M8.500 1.500l7 7.500-7 7.500" fill="none" stroke="#323130" stroke-width="1.400"/></svg>
        </div>
        <div class="an"><span v-fit="61">Analytics</span></div>
        <div class="modes">
          <svg width="32" height="32"><g fill="none" stroke="#201f1e" stroke-width="1.500"><path d="M0 1h24"/><path d="M.8 7h29v9h-29zM.8 20.500h29v9h-29z" stroke-dasharray="3 1.700"/></g></svg>
          <svg class="m2" width="30" height="32"><g fill="none" stroke="#323130" stroke-width="1.400"><path d="M1 24v-10.500h7M8.500 19v-16.500h8v14M16.500 9.500h8v2"/><path d="M27 12l-12 10.500 3 3.500 9-13.500zM14.500 22.500l3.500 3.500c-2 4-8 4-13 3.500 4-1 4-6 9.500-7z"/></g></svg>
          <div class="m3"><svg width="40" height="40"><circle cx="18" cy="18" r="12" fill="#e6e5e3" stroke="#252423" stroke-width="1.500"/><path d="M6.500 18.500l5-2.500 4 2 7-5.500 6.500-.5c1.500 3 1.500 8 0 10.500-3 5-6.500 7-11 7-6 0-11-5-11.500-11z" fill="#117865" stroke="#252423" stroke-width="1"/><path d="M12.500 20v7M17 19v10M21.500 18v10.500M26 16v8" stroke="#252423" stroke-width="1.200"/><path d="M27 26.500l8 8" stroke="#252423" stroke-width="4"/></svg></div>
        </div>
        <svg class="notch" width="225" height="12"><path d="M0 10.500h185.500l9.500-9.500 9.500 9.500h21" fill="none" stroke="#8a8886" stroke-width="1.200"/></svg>
        <div class="search">
          <svg width="22" height="22"><g fill="none" stroke="#605e5c" stroke-width="1.200"><circle cx="13" cy="8" r="6"/><path d="M8.800 12.300l-8 8"/></g></svg>
          <span v-fit="52">Search</span>
        </div>
        <div class="row1"></div>
        <div class="sec"><svg width="20" height="18"><path d="M5 1l7 7.500-7 7.500" fill="none" stroke="#323130" stroke-width="1.600"/></svg><span v-fit="65">Error bars</span></div>
        <div class="sec"><svg width="20" height="18"><path d="M1.500 4.500l7 7 7-7" fill="none" stroke="#323130" stroke-width="1.600"/></svg><span v-fit="56">Forecast</span><div class="tg"><span v-fit="14">On</span><i></i></div></div>
        <div class="opts">
          <div class="oc">
            <div class="oh"><svg width="20" height="18"><path d="M.7 5l7 7 7-7" fill="none" stroke="#323130" stroke-width="1.600"/></svg><span v-fit="54">Options</span></div>
            <label class="fl"><span v-fit="34">Units</span><svg width="16" height="16"><circle cx="8" cy="8" r="6.800" fill="none" stroke="#484644" stroke-width="1.200"/><path d="M8 7v5M8 4.500v1.300" stroke="#797775" stroke-width="1.200"/></svg></label>
            <div class="inp sel"><span v-fit="40">Points</span><svg width="16" height="10"><path d="M1 1l7 7 7-7" fill="none" stroke="#323130" stroke-width="1.500"/></svg></div>
            <label class="fl"><span v-fit="101">Forecast length</span></label>
            <div class="inp num"><span v-fit="15">31</span><svg width="12" height="20"><path d="M1 6l5-5 5 5M1 14l5 5 5-5" fill="none" stroke="#a19f9d" stroke-width="1.300"/></svg></div>
            <label class="fl"><span v-fit="95">Ignore the last</span></label>
            <div class="inp num"><span>1</span><svg width="12" height="20"><path d="M1 6l5-5 5 5M1 14l5 5 5-5" fill="none" stroke="#a19f9d" stroke-width="1.300"/></svg></div>
            <label class="fl"><span v-fit="74">Seasonality</span></label>
            <div class="seas"><div class="inp num sm"><span v-fit="32">Auto</span><svg width="12" height="20"><path d="M1 6l5-5 5 5M1 14l5 5 5-5" fill="none" stroke="#a19f9d" stroke-width="1.300"/></svg></div><span v-fit="40">Points</span></div>
            <label class="fl"><span v-fit="127">Confidence interval</span></label>
            <div class="inp sel"><span v-fit="28">95%</span><svg width="16" height="10"><path d="M1 1l7 7 7-7" fill="none" stroke="#323130" stroke-width="1.500"/></svg></div>
            <div class="apply"><span v-fit="40">Apply</span></div>
          </div>
          <div class="oc last"><div class="oh"><svg width="20" height="18"><path d="M4 1l7 7.500-7 7.500" fill="none" stroke="#323130" stroke-width="1.600"/></svg><span v-fit="85">Forecast line</span></div></div>
          <div class="sb"></div>
        </div>
      </aside>
      <div class="edge"><i></i></div>
    </main>
  </div>
</template>

<style>
html, body { margin: 0; overflow: hidden; }
</style>

<style scoped>
.app { width: 1702px; height: 938px; overflow: hidden; background: #f3f2f1; font-family: "Noto Sans", "Open Sans", sans-serif; color: #323130; display: flex; flex-direction: column; font-size: 14px; white-space: nowrap; }
.app * { box-sizing: border-box; }
svg { display: block; flex: none; }
.ribbon { height: 153px; background: #fafafa; position: relative; z-index: 2; box-shadow: 0 1px 4px rgba(0,0,0,.22); flex: none; }
.tabs { display: flex; height: 34px; }
.tab { display: flex; justify-content: center; height: 34px; line-height: 31px; font-size: 16px; color: #252423; flex: none; }
.tab.active { font-weight: 600; font-family: "Open Sans", sans-serif; }
.tab.active span { border-bottom: 3px solid #117865; height: 34px; }
.tab.ctx { font-weight: 600; font-family: "Open Sans", sans-serif; background: #fff; color: #0c4a3e; }
.tab.drill { margin-left: 5px; }
.groups { display: flex; height: 110px; margin-top: 7px; }
.group { border-right: 1px solid #d2d0ce; height: 110px; display: flex; flex-direction: column; flex: none; }
.clip { width: 201px; }
.clipbody { display: flex; height: 92px; }
.row { display: flex; height: 92px; }
.btn { display: flex; flex-direction: column; align-items: center; padding-top: 3px; flex: none; }
.btn .l { height: 20px; line-height: 20px; font-size: 14.5px; margin-top: 1px; color: #3b3a39; }
.btn .two { display: flex; align-items: center; margin-top: 0; }
.dd { margin: 2px 1px 0 2px; }
.dis .l, .paste .l { color: #c2c0be; }
.btn.dis .two { color: #a19f9d; height: 20px; }
.dis .dd { margin-left: 0; }
.gname { text-align: center; height: 18px; line-height: 23px; font-size: 12px; color: #484644; }
.paste { width: 60px; margin-left: 5px; }
.cmds { margin-top: -1px; }
.cmd { display: flex; height: 30px; align-items: center; gap: 3px; font-size: 14.5px; color: #3b3a39; }
.cmd svg { margin-top: 2px; }
.body { display: flex; flex: 1; min-height: 0; }
.rail { width: 51px; border-right: 1px solid #d9d7d5; flex: none; }
.ri { height: 50px; display: flex; align-items: center; padding-left: 12px; border-left: 0 solid #117865; }
.ri.on { border-left-width: 3px; padding-left: 9px; }
.work { width: 1376px; display: flex; flex-direction: column; flex: none; }
.canvas { height: 746px; background: #fff; padding: 11px 0 0 46px; }
.page { width: 1284px; height: 724px; border: 2px dotted #5c5a58; padding: 11px 0 0 1px; display: flex; flex-direction: column; gap: 9px; }
.card { width: 1266px; background: #b3b3b3; position: relative; flex: none; }
.sales { height: 372px; border-bottom: 1px solid #7c7c7c; }
.profit { height: 328px; }
.head { height: 53px; border-bottom: 1px solid #333; padding-left: 5px; }
.profit .head { height: 54px; border-bottom: 2px solid #616161; }
.head span { text-decoration: underline; text-underline-offset: 2px; text-decoration-thickness: 1px; }
.t1 { height: 26px; line-height: 24px; font-family: "Roboto", sans-serif; font-weight: 600; font-size: 16px; color: #252423; }
.t2 { height: 24px; line-height: 22px; font-family: "Open Sans", sans-serif; font-weight: 700; font-size: 15px; color: #000; }
.plot { overflow: visible; }
.plot text { text-anchor: middle; }
.dl text { font-size: 12px; fill: #666462; }
.plot .yl text { font: 600 12px "Open Sans", sans-serif; text-anchor: end; fill: #000; }
.xl text { font: 600 12px "Open Sans", sans-serif; fill: #000; }
.plot .at { font: 600 14px Roboto, sans-serif; fill: #252423; }
.tools { position: absolute; right: 1px; top: 351px; display: flex; gap: 5px; z-index: 2; }
.tool { height: 21px; background: #fff; }
.w29 { width: 29px; } .w30 { width: 30px; }
.tool svg { overflow: visible; }
.tip { position: absolute; left: 837px; top: 199px; width: 214px; height: 90px; background: rgba(46,46,46,.93); color: #e1dfdd; padding: 18px 0 0 20px; z-index: 3; }
.tip::before { content: ""; position: absolute; left: -8px; top: 8px; border: 8px solid transparent; border-left: 0; border-right-color: rgba(46,46,46,.93); }
.date { font: 700 15px/24px "Open Sans", sans-serif; height: 24px; }
.val { display: flex; align-items: center; height: 28px; font-size: 14px; line-height: 18px; color: #c8c6c4; }
.val i { width: 13px; height: 13px; border-radius: 50%; background: #118dff; margin-right: 8px; }
.val .k { margin-right: 15px; }
.val b { font: 700 14px/18px "Open Sans", sans-serif; color: #e1dfdd; }
.handles { position: absolute; left: -1px; top: -2px; overflow: visible; z-index: 1; }
.foot { height: 39px; display: flex; align-items: stretch; }
.vi { padding: 5px 0 0 0; width: 30px; margin-left: 13px; border-bottom: 3px solid transparent; height: 38px; }
.vi.on { border-bottom-color: #117865; }
.vi.ph { width: 20px; margin-left: 30px; }
.arr { margin: 16px 6px 0 24px; }
.pt { background: #fff; border-left: 1px solid #b3b0ad; display: flex; justify-content: center; line-height: 44px; width: 95px; color: #3b3a39; }
.pt.cur { width: 98px; font-family: "Open Sans", sans-serif; font-weight: 600; color: #201f1e; }
.add { width: 49px; background: #117865; display: flex; justify-content: center; padding-top: 12px; }
.filters { width: 41px; background: #fff; border-left: 1px solid #b3b0ad; height: 746px; flex: none; }
.ft { writing-mode: vertical-rl; font: 600 16px/24px "Open Sans", sans-serif; color: #252423; margin: -3px 0 0 9px; }
.viz { width: 227px; border-left: 1px solid #dddbd9; border-right: 1px solid #d9d7d5; display: flex; flex-direction: column; flex: none; }
.vh { display: flex; justify-content: space-between; align-items: center; padding: 0 9px 0 10px; margin-top: 12px; height: 26px; font: 600 18px/26px "Open Sans", sans-serif; color: #252423; }
.an { padding-left: 10px; font: 600 14px/20px "Open Sans", sans-serif; height: 20px; margin-top: 10px; color: #252423; }
.modes { display: flex; height: 40px; margin-top: 4px; align-items: center; padding-left: 15px; }
.m2 { margin-left: 53px; }
.m3 { width: 40px; height: 40px; background: #d2d0ce; border-radius: 3px; margin-left: 45px; }
.notch { margin-top: 5px; }
.search { margin: 9px 0 0 10px; width: 205px; height: 33px; border: 1px solid #6e6c6a; border-radius: 3px; display: flex; align-items: center; padding-left: 8px; gap: 5px; font-size: 16px; color: #605e5c; }
.row1 { height: 33px; flex: none; }
.sec { height: 51px; border-top: 1px solid #dddbd9; display: flex; align-items: center; padding: 0 9px; gap: 1px; font: 600 14px "Open Sans", sans-serif; color: #252423; flex: none; }
.tg { margin-left: auto; width: 40px; height: 20px; border-radius: 10px; background: #117865; color: #fff; font: 600 11px/20px "Noto Sans", sans-serif; display: flex; align-items: center; padding: 0 6px; justify-content: space-between; }
.tg i { width: 10px; height: 10px; border-radius: 50%; background: #fff; }
.opts { background: #dfdedd; height: 474px; padding: 10px 0 0 10px; position: relative; overflow: hidden; flex: none; }
.oc { width: 205px; height: 415px; border-radius: 4px; background: #f3f2f1; box-shadow: 0 1px 4px rgba(0,0,0,.22); padding: 15px 10px 0; }
.last { margin-top: 10px; height: 60px; }
.oh { display: flex; align-items: center; height: 20px; font: 600 14px "Open Sans", sans-serif; color: #252423; }
.fl { display: flex; justify-content: space-between; align-items: center; height: 20px; margin-top: 15px; margin-bottom: 5px; font-size: 14px; color: #3b3a39; }
.inp { border: 1px solid #8a8886; border-radius: 2px; background: #fff; height: 30px; display: flex; align-items: center; justify-content: space-between; color: #605e5c; font-size: 14px; }
.inp + .fl { margin-top: 10px; }
.seas + .fl { margin-top: 10px; }
.sel { padding: 0 7px 0 10px; }
.num { width: 88px; padding: 0 2px 0 5px; }
.sm { width: 60px; padding-left: 8px; }
.seas { display: flex; align-items: center; gap: 4px; color: #3b3a39; }
.apply { width: 82px; height: 30px; border: 1px solid #c8c6c4; margin: 10px 0 0 auto; text-align: center; font: 600 14.5px/29px "Open Sans", sans-serif; color: #a19f9d; }
.sb { position: absolute; right: 0; top: 70px; width: 7px; height: 290px; border-radius: 4px; background: #c8c6c4; }
.edge { flex: 1; padding: 57px 0 0 5px; }
.edge i { display: block; width: 8px; height: 33px; border: 1px solid #797775; border-radius: 3px; }
</style>
